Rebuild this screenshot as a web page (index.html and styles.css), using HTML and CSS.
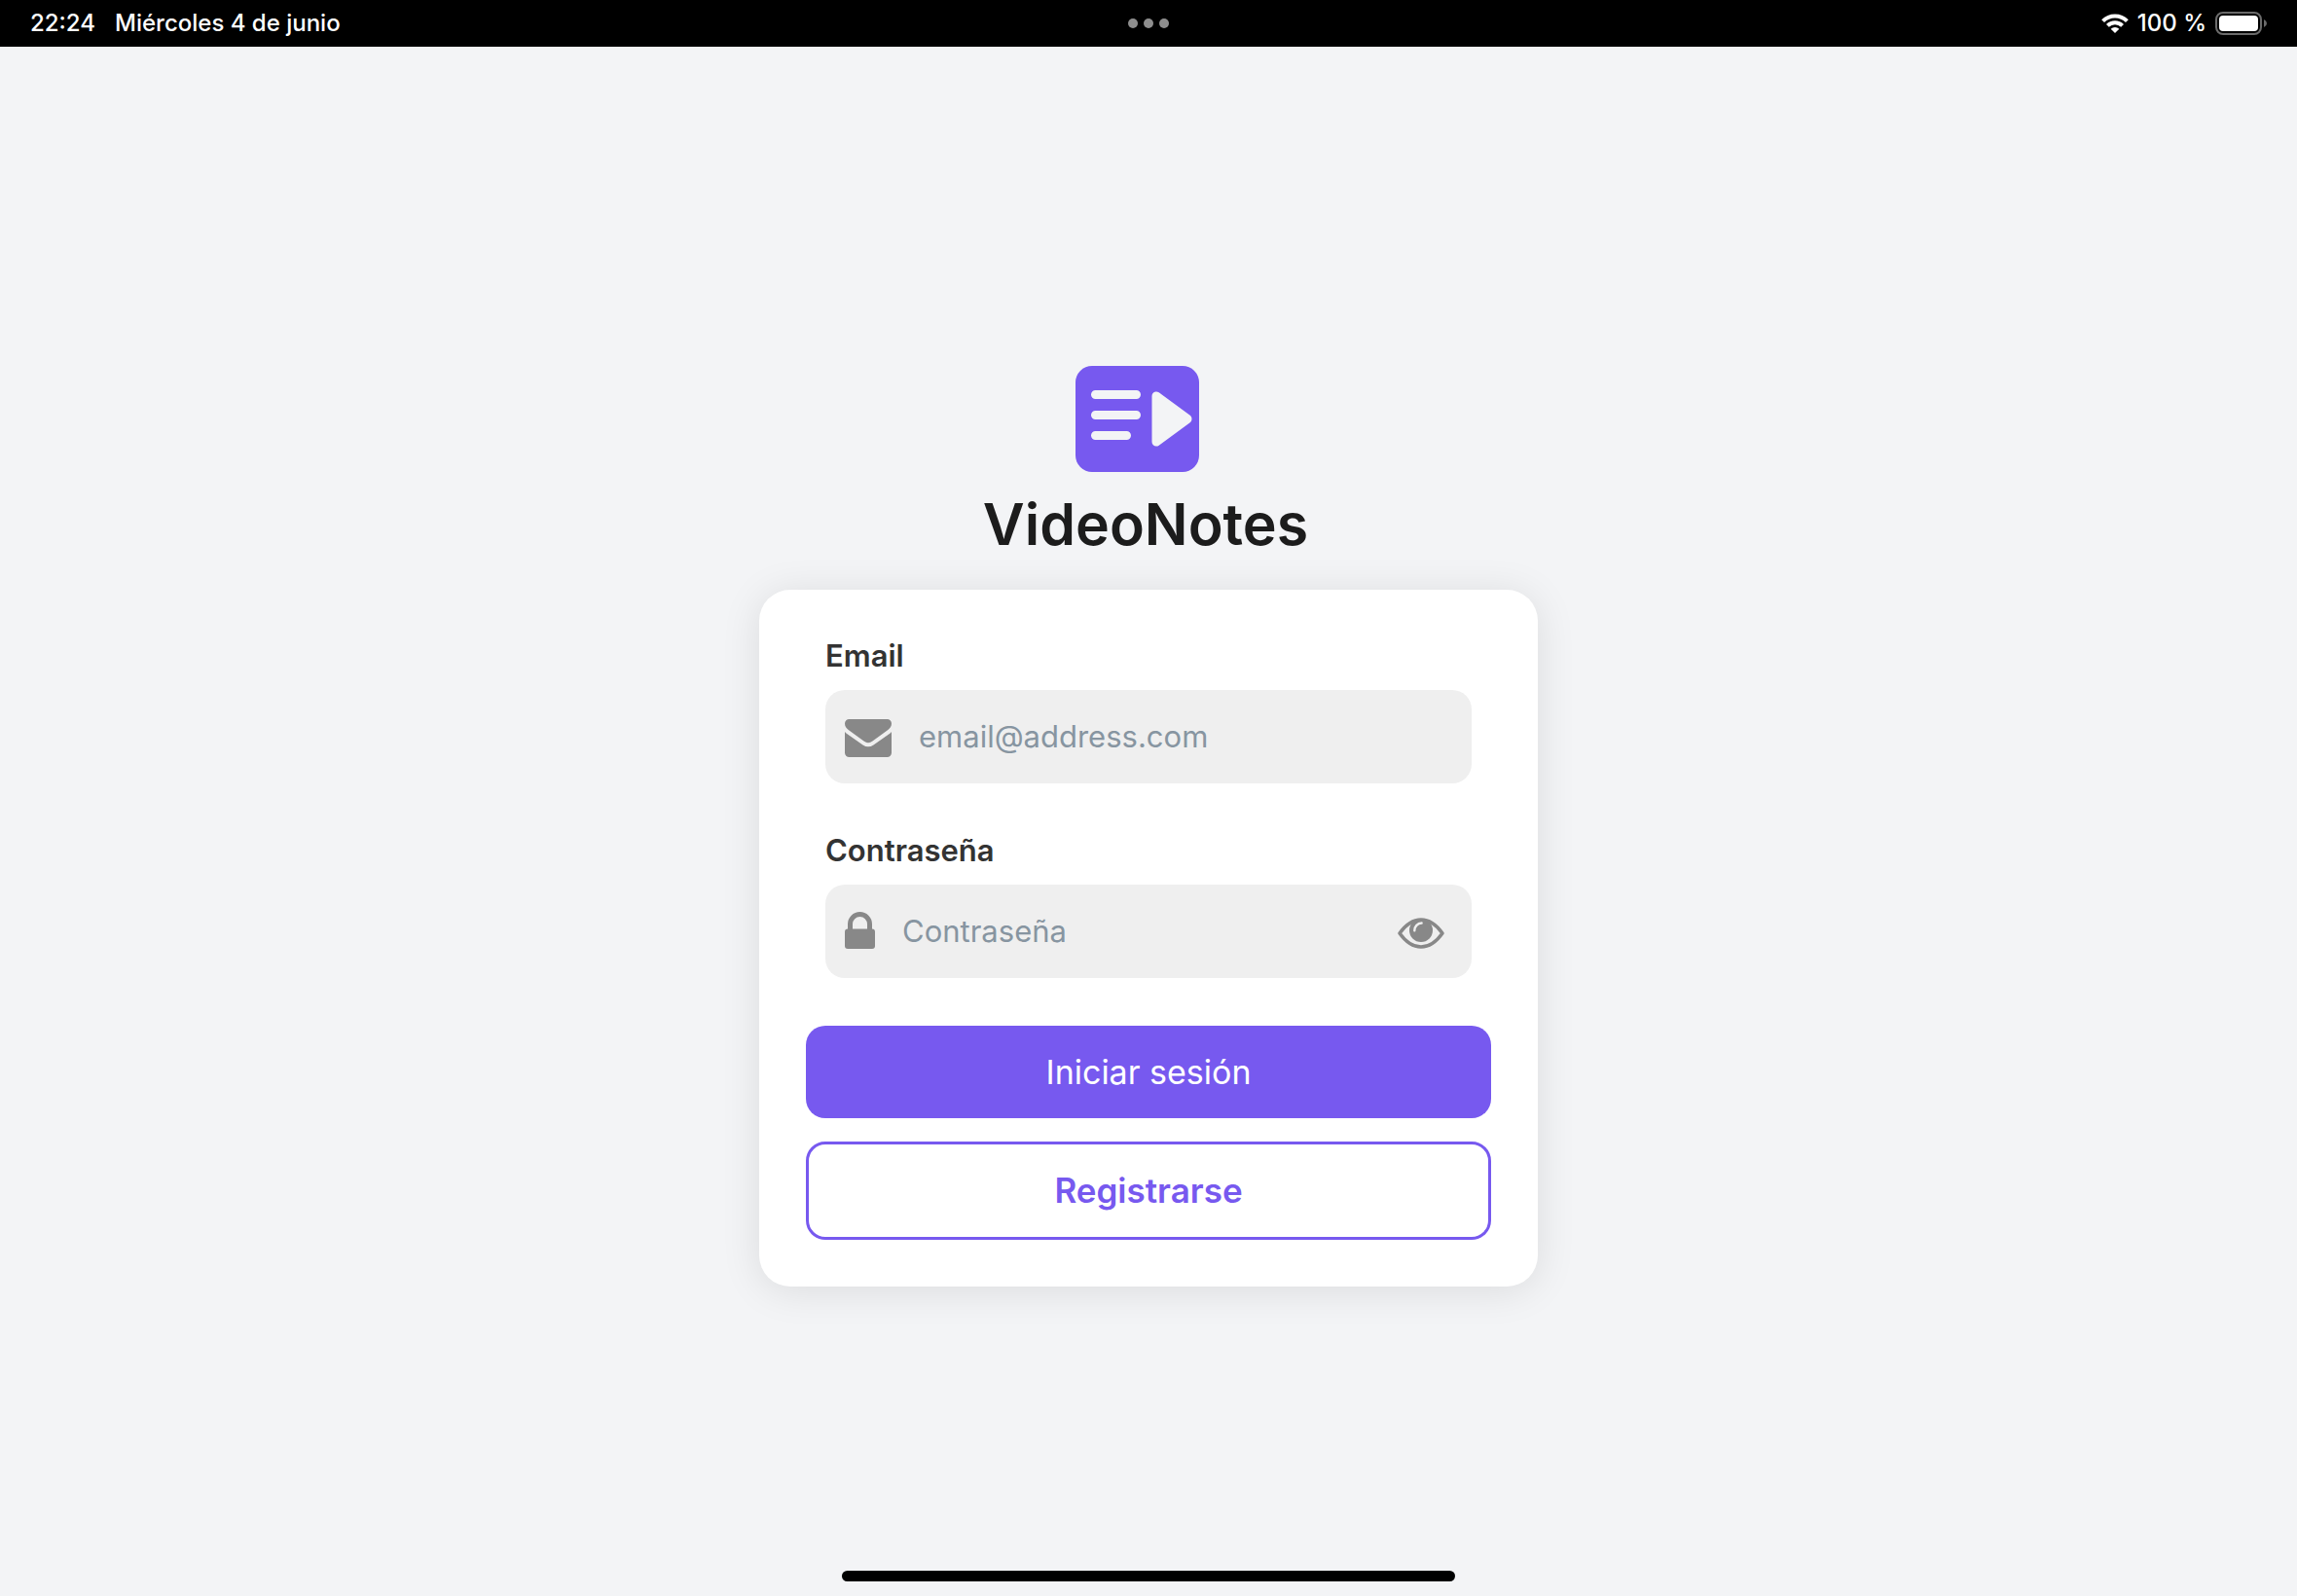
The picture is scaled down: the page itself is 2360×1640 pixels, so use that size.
FILE: index.html
```html
<!DOCTYPE html>
<html lang="es">
<head>
<meta charset="utf-8">
<meta name="viewport" content="width=device-width, initial-scale=1">
<title>VideoNotes</title>
<link rel="stylesheet" href="styles.css">
</head>
<body>
<header class="status">
  <div class="status-left"><span>22:24</span><span>Miércoles 4 de junio</span></div>
  <div class="dots"><i class="dot"></i><i class="dot"></i><i class="dot"></i></div>
  <div class="status-right">
    <svg class="wifi" width="28" height="20" viewBox="0 0 28 20" fill="none" stroke="#fff" stroke-width="4" aria-hidden="true">
      <path d="M1.6 7.6a17.6 17.6 0 0 1 24.8 0"/>
      <path d="M6.4 12.4a10.8 10.8 0 0 1 15.2 0"/>
      <path d="M14 20l-4.3-4.3a6.1 6.1 0 0 1 8.6 0z" fill="#fff" stroke="none"/>
    </svg>
    <span>100 %</span>
    <svg class="battery" width="53" height="24" viewBox="0 0 53 24" aria-hidden="true">
      <rect x="1" y="1" width="46" height="22" rx="7" fill="none" stroke="#6b6b6b" stroke-width="2"/>
      <rect x="4" y="4" width="40" height="16" rx="4" fill="#fff"/>
      <path d="M50 8q3 1.300 3 4t-3 4z" fill="#6b6b6b"/>
    </svg>
  </div>
</header>

<main class="login">
  <div class="brand">
    <svg class="logo" width="127" height="109" viewBox="0 0 127 109" aria-hidden="true">
      <rect width="127" height="109" rx="17" fill="#7759ef"/>
      <g stroke="#f3f4f6" stroke-width="9" stroke-linecap="round">
        <path d="M20.500 29.500h42M20.500 50.500h42M20.500 71.500h32"/>
      </g>
      <path d="M83 31v47l32-23.500z" fill="#f3f4f6" stroke="#f3f4f6" stroke-width="9" stroke-linejoin="round"/>
    </svg>
    <h1 class="title">VideoNotes</h1>
  </div>

  <form class="card">
    <div class="group">
      <label class="label" for="email">Email</label>
      <div class="field">
        <svg width="48" height="42" viewBox="0 -3 48 42" fill="#888" aria-hidden="true">
          <path d="M4.500 0h39A4.500 4.500 0 0 1 48 4.500C48 7.500 46.500 9.500 44 11.200L28.500 22.600Q24 26 19.500 22.600L4 11.200C1.500 9.500 0 7.500 0 4.500A4.500 4.500 0 0 1 4.500 0z"/>
          <path d="M0 13Q1 14.200 2.500 15.200L18.500 26.500Q24 30.200 29.500 26.500L45.500 15.200Q47 14.200 48 13V34.500A4.500 4.500 0 0 1 43.500 39h-39A4.500 4.500 0 0 1 0 34.500z"/>
        </svg>
        <input class="input" id="email" type="email" placeholder="email@address.com">
      </div>
    </div>
    <div class="group">
      <label class="label" for="password">Contraseña</label>
      <div class="field">
        <svg width="31" height="40" viewBox="0 0 31 40" aria-hidden="true">
          <path d="M5.500 20v-7.500a10 10 0 0 1 20 0V20" fill="none" stroke="#888" stroke-width="5"/>
          <rect y="17.500" width="31" height="20.500" rx="3" fill="#888"/>
        </svg>
        <input class="input" id="password" type="password" placeholder="Contraseña">
        <button class="reveal" type="button" aria-label="Mostrar contraseña">
          <svg width="48" height="32" viewBox="0 0 48 32" aria-hidden="true">
            <path d="M2 16Q12 2 24 2t22 14Q36 30 24 30T2 16z" fill="none" stroke="#888" stroke-width="3.500" stroke-linejoin="round"/>
            <circle cx="24" cy="13" r="12" fill="#888"/>
            <path d="M17.300 13.300a7.600 7.600 0 0 1 7.300-7.800" fill="none" stroke="#efefef" stroke-width="2.400" stroke-linecap="round"/>
          </svg>
        </button>
      </div>
    </div>
    <div class="actions">
      <button class="btn btn-primary" type="submit">Iniciar sesión</button>
      <button class="btn btn-outline" type="button">Registrarse</button>
    </div>
  </form>
</main>

<footer class="home"><div class="home-bar"></div></footer>
</body>
</html>
```

FILE: styles.css
```css
* {
  box-sizing: border-box;
}

body {
  margin: 0;
  min-height: 100vh;
  display: flex;
  flex-direction: column;
  background: #f3f4f6;
  font-family: Inter, "Liberation Sans", sans-serif;
}

/* Status bar */
.status {
  display: grid;
  grid-template-columns: 1fr auto 1fr;
  align-items: center;
  height: 48px;
  padding: 0 31px;
  background: #000;
  color: #fff;
  font-size: 24px;
  font-weight: 500;
  line-height: 28px;
}

.status-left {
  display: flex;
  gap: 20px;
}

.status-right {
  display: flex;
  align-items: center;
  justify-content: flex-end;
  gap: 9px;
}

.dots {
  display: flex;
  gap: 6px;
}

.dot {
  width: 10px;
  height: 10px;
  border-radius: 50%;
  background: #8e8e8e;
}

/* Login screen */
.login {
  flex: 1;
  display: flex;
  flex-direction: column;
  align-items: center;
  justify-content: center;
  gap: 31px;
  padding-top: 36px;
}

.brand {
  display: flex;
  flex-direction: column;
  align-items: center;
  gap: 17px;
  padding-right: 6px;
}

.logo {
  margin-right: 18px;
}

.title {
  margin: 0;
  color: #1c1c1c;
  font-size: 59px;
  font-weight: 600;
  line-height: 73px;
}

.card {
  display: flex;
  flex-direction: column;
  gap: 49px;
  width: 100%;
  max-width: 800px;
  padding: 48px;
  border-radius: 32px;
  background: #fff;
  box-shadow: 0 4px 40px rgba(0, 0, 0, 0.1);
}

.group {
  display: flex;
  flex-direction: column;
  gap: 16px;
  margin: 0 20px;
}

.label {
  color: #333;
  font-size: 31px;
  font-weight: 600;
  line-height: 39px;
}

.field {
  display: flex;
  align-items: center;
  gap: 28px;
  height: 96px;
  padding: 0 28px 0 20px;
  border-radius: 20px;
  background: #efefef;
}

.input {
  flex: 1;
  min-width: 0;
  padding: 0;
  border: 0;
  outline: 0;
  background: none;
  color: #333;
  font: inherit;
  font-size: 31px;
  line-height: 40px;
}

.input::placeholder {
  color: #8795a1;
  opacity: 1;
}

.reveal {
  display: flex;
  padding: 4px 0 0;
  border: 0;
  background: none;
}

.actions {
  display: flex;
  flex-direction: column;
  gap: 24px;
}

.btn {
  padding: 24px;
  border: 0;
  border-radius: 20px;
  font: inherit;
  font-size: 34px;
  line-height: 47px;
}

.btn-primary {
  background: #7759ef;
  color: #fff;
}

.btn-outline {
  border: 3px solid #7759ef;
  background: #fff;
  color: #7759ef;
  font-size: 35px;
  font-weight: 600;
}

/* Home indicator */
.home {
  display: flex;
  justify-content: center;
  padding-bottom: 15px;
}

.home-bar {
  width: 630px;
  max-width: 60%;
  height: 11px;
  border-radius: 6px;
  background: #000;
}
```
